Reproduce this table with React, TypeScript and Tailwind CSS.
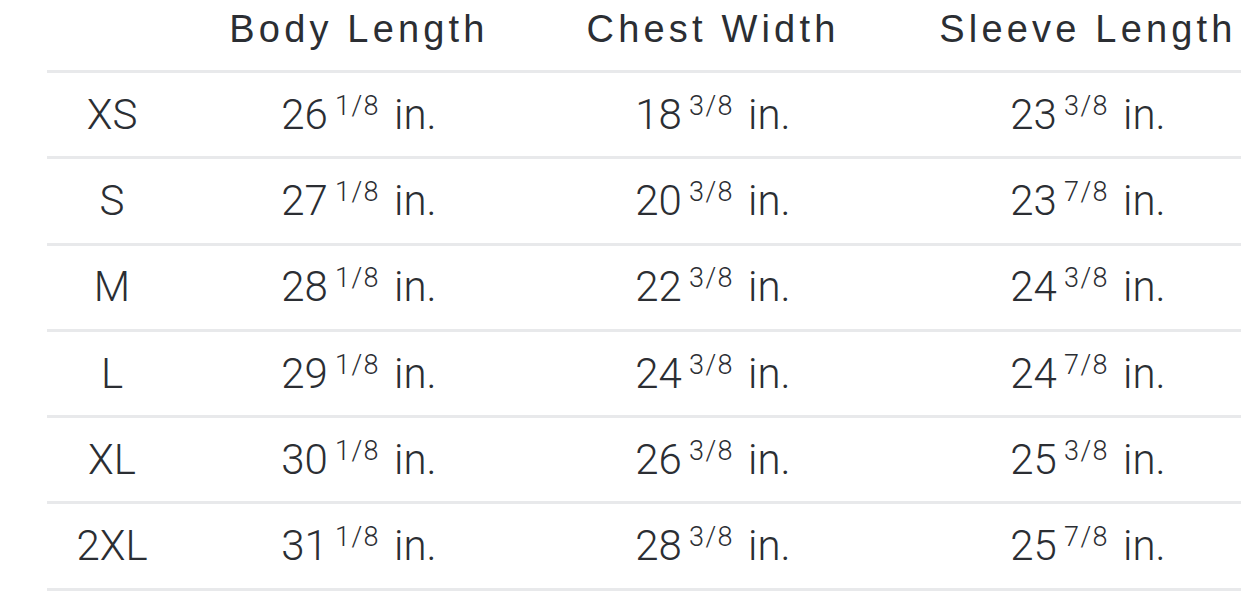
const rows: [string, string, string, string, string, string, string][] = [
  ["XS", "26", "1/8", "18", "3/8", "23", "3/8"],
  ["S", "27", "1/8", "20", "3/8", "23", "7/8"],
  ["M", "28", "1/8", "22", "3/8", "24", "3/8"],
  ["L", "29", "1/8", "24", "3/8", "24", "7/8"],
  ["XL", "30", "1/8", "26", "3/8", "25", "3/8"],
  ["2XL", "31", "1/8", "28", "3/8", "25", "7/8"],
];

function Measure({ whole, frac }: { whole: string; frac: string }) {
  return (
    <span className="inline-flex items-start">
      <span>{whole}</span>
      <span className="ml-[7px] mr-[14px] mt-[3px] text-[27px] leading-none tracking-[1.5px]">{frac}</span>
      <span>in.</span>
    </span>
  );
}

export default function App() {
  const cols = "grid grid-cols-[130px_364px_344px_406px]";
  return (
    <div className="h-[615px] w-[1241px] overflow-hidden bg-white font-['Roboto',sans-serif] text-[#2b2e33]">
      <div className="ml-[47px] w-[1244px]">
        <div
          className={`${cols} h-[70px] items-center pb-[12px] font-['Liberation_Sans',sans-serif] text-[38px] font-normal tracking-[0.11em]`}
        >
          <div />
          <div className="text-center">Body Length</div>
          <div className="text-center">Chest Width</div>
          <div className="text-center">Sleeve Length</div>
        </div>
        {rows.map((r) => (
          <div
            key={r[0]}
            className={`${cols} h-[86.3px] items-center border-t-[3px] border-[#e8e9eb] text-[42px] font-light leading-[50px]`}
          >
            <div className="text-center">{r[0]}</div>
            <div className="text-center">
              <Measure whole={r[1]} frac={r[2]} />
            </div>
            <div className="text-center">
              <Measure whole={r[3]} frac={r[4]} />
            </div>
            <div className="text-center">
              <Measure whole={r[5]} frac={r[6]} />
            </div>
          </div>
        ))}
        <div className="border-t-[3px] border-[#e8e9eb]" />
      </div>
    </div>
  );
}
